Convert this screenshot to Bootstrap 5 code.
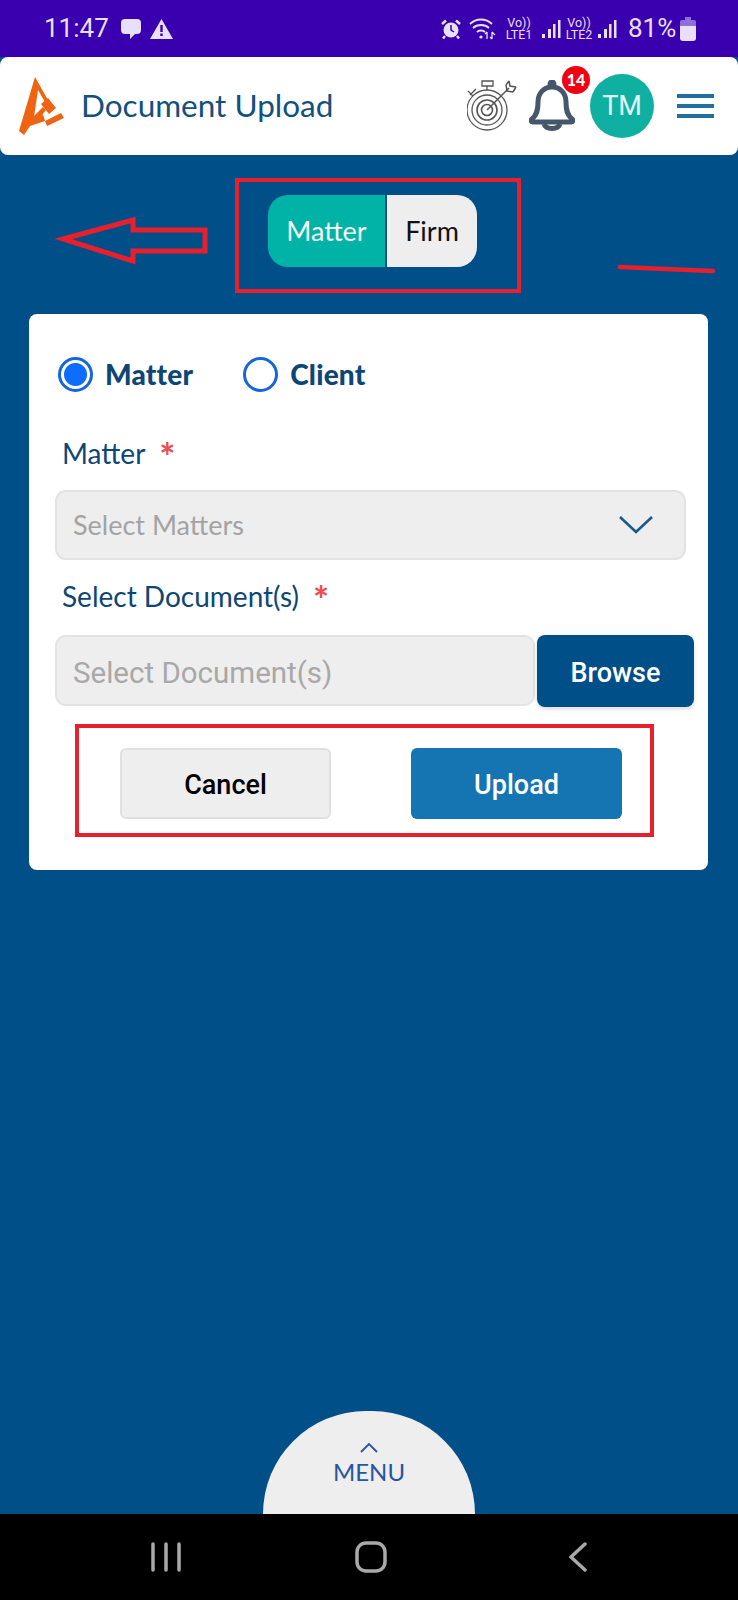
<!DOCTYPE html>
<html lang="en">
  <head>
    <meta charset="UTF-8" />
    <meta name="viewport" content="width=device-width, initial-scale=1.0" />
    <title>Document Upload</title>
    <link
      href="https://cdn.jsdelivr.net/npm/bootstrap@5.3.0/dist/css/bootstrap.min.css"
      rel="stylesheet"
    />
    <style>
      body {
        background: #014f89;
        font-family: Lato, sans-serif;
      }
      .app-screen {
        position: relative;
        width: 738px;
        height: 1600px;
        overflow: hidden;
      }
      .status-bar {
        height: 57px;
        background: #3a00af;
        color: #eadffa;
        font-family: Roboto, sans-serif;
      }
      .status-time {
        font-size: 26px;
        margin-left: 44px;
        width: 72px;
      }
      .status-pct {
        font-size: 26px;
        margin-left: 11px;
        width: 52px;
      }
      .lte-tag {
        font-size: 12.500px;
        line-height: 12px;
        text-align: center;
        width: 28px;
      }
      .app-header {
        height: 98px;
        background: #fff;
        border-radius: 8px;
      }
      .header-title {
        font-size: 31.500px;
        color: #12507e;
        margin-left: 17px;
      }
      .alert-count {
        position: absolute;
        top: -14px;
        right: -15px;
        width: 28px;
        height: 28px;
        border-radius: 50%;
        background: #f2000f;
        color: #fff;
        font-size: 16px;
        font-weight: 900;
        line-height: 28px;
        text-align: center;
      }
      .user-avatar {
        width: 64px;
        height: 64px;
        border-radius: 50%;
        background: #0fb0a2;
        color: #e4f7f5;
        font-family: Roboto, sans-serif;
        font-size: 27px;
        line-height: 64px;
        text-align: center;
      }
      .burger-bar {
        width: 37px;
        height: 4px;
        background: #1f6f9f;
      }
      .scope-switch {
        margin-top: 40px;
        margin-left: 7px;
        height: 72px;
      }
      .scope-switch .btn {
        font-size: 27px;
        border: 0;
        padding: 0;
      }
      .scope-switch .scope-on {
        width: 119px;
        background: #00b3a6;
        color: #f4fbfa;
        border-right: 2px solid #014f89;
        border-radius: 20px 0 0 20px;
      }
      .scope-switch .scope-off {
        width: 90px;
        background: #eeeeee;
        color: #111;
        border-radius: 0 20px 20px 0;
      }
      .upload-card {
        margin: 47px 30px 0 29px;
        height: 556px;
        border: 0;
        border-radius: 8px;
        padding: 42px 22px 0 26px;
      }
      .pick-row {
        height: 36px;
        margin-left: 3px;
      }
      .pick-row .form-check {
        padding: 0;
        margin: 0;
      }
      .pick-row .form-check-input {
        float: none;
        width: 35px;
        height: 35px;
        margin: 0 12px 0 0;
        border: 3px solid #1567d8;
        background-image: none;
      }
      .pick-row .form-check-input:checked {
        background-color: #fff;
        background-image: radial-gradient(circle, #0d6efd 0 11px, #fff 12px);
      }
      .pick-row .form-check-label {
        font-size: 28px;
        font-weight: 900;
        letter-spacing: 0.200px;
        color: #0d4675;
        opacity: 1;
      }
      .pick-gap {
        width: 50px;
      }
      .field-label {
        display: flex;
        align-items: center;
        height: 36px;
        font-size: 28px;
        line-height: 36px;
        color: #0d4675;
        margin: 0 0 0 7px;
      }
      .req-mark {
        color: #ee4b52;
        margin-left: 14px;
        padding-top: 6px;
        font-size: 38px;
        font-weight: 700;
        line-height: 36px;
      }
      .upload-card .form-select,
      .upload-card .form-control {
        height: 70px;
        background-color: #eeeeee;
        border: 2px solid #e3e3e3;
        border-radius: 11px;
        padding-left: 16px;
      }
      .upload-card .form-select {
        margin-top: 19px;
        font-size: 27px;
        color: #a3a3a3;
        background-position: right 31px center;
        background-size: 34px 18px;
        background-image: url("data:image/svg+xml,%3csvg xmlns='http://www.w3.org/2000/svg' viewBox='0 0 34 18'%3e%3cpath fill='none' stroke='%231a5a8a' stroke-width='2.6' d='M1 1l16 15L33 1'/%3e%3c/svg%3e");
      }
      .doc-group {
        margin-top: 21px;
        width: 639px;
      }
      .upload-card .form-control {
        font-family: Roboto, sans-serif;
        font-size: 29.500px;
        height: 71px;
        padding-top: 10px;
        padding-bottom: 6px;
      }
      .upload-card .form-control::placeholder {
        color: #a8a8a8;
        opacity: 1;
      }
      .browse-btn {
        width: 157px;
        height: 72px;
        margin-left: 2px;
        padding-top: 10px;
        background: #014f89;
        color: #fff;
        font-family: Roboto, sans-serif;
        font-size: 27px;
        font-weight: 500;
        border: 0;
        border-radius: 8px;
        box-shadow: 0 2px 4px rgba(0, 0, 0, 0.15);
      }
      .action-row {
        margin: 41px 0 0 65px;
        gap: 80px;
      }
      .action-row .btn {
        width: 211px;
        height: 71px;
        padding-top: 10px;
        font-family: Roboto, sans-serif;
        font-size: 27px;
        font-weight: 500;
        border-radius: 6px;
      }
      .cancel-btn {
        background: #eeeeee;
        color: #000;
        border: 2px solid #e0e0e0;
      }
      .send-btn {
        background: #1575b2;
        color: #fff;
        border: 0;
      }
      .menu-dome {
        width: 212px;
        height: 103px;
        margin-top: auto;
        background: #eeeeee;
        border-radius: 106px 106px 0 0;
        color: #27559f;
        font-size: 24px;
        line-height: 24px;
        padding-top: 32px;
        gap: 7px;
      }
      .nav-strip {
        height: 86px;
        background: #000;
        padding-left: 151px;
        padding-right: 151px;
      }
      .mark-box {
        position: absolute;
        border: 4px solid #e8202e;
        pointer-events: none;
      }
      .mark-scope {
        left: 235px;
        top: 178px;
        width: 286px;
        height: 115px;
      }
      .mark-actions {
        left: 75px;
        top: 724px;
        width: 579px;
        height: 113px;
      }
      .mark-draw {
        position: absolute;
        left: 0;
        top: 0;
        pointer-events: none;
      }
    </style>
  </head>
  <body class="m-0">
    <div class="app-screen d-flex flex-column">
      <div class="status-bar d-flex align-items-center flex-shrink-0">
        <span class="status-time">11:47</span>
        <svg width="22" height="22" viewBox="0 0 22 22" class="ms-1">
          <path fill="#eadffa" d="M5 1h12a4 4 0 0 1 4 4v7a4 4 0 0 1-4 4h-2l-5 5v-5H5a4 4 0 0 1-4-4V5a4 4 0 0 1 4-4z" />
        </svg>
        <svg width="23" height="21" viewBox="0 0 23 21" class="ms-2">
          <path fill="#eadffa" d="M11.500 1L23 21H0z" />
          <path fill="#3a00af" d="M10.300 7h2.400v7h-2.400zM10.300 15.500h2.400v2.500h-2.400z" />
        </svg>
        <div class="flex-grow-1"></div>
        <svg width="20" height="20" viewBox="0 0 20 20">
          <circle cx="10" cy="11" r="7.500" fill="#eadffa" />
          <path stroke="#3a00af" stroke-width="1.500" fill="none" d="M10 6v5l3 2" />
          <path stroke="#eadffa" stroke-width="2.500" d="M1 5l4-3.500M19 5l-4-3.500M4 17l-2 2.500M16 17l2 2.500" />
        </svg>
        <svg width="28" height="22" viewBox="0 0 28 22" class="ms-2">
          <g fill="none" stroke="#eadffa" stroke-width="1.800">
            <path d="M1 6c6-6 16-6 22 0M4 10c4-4 12-4 16 0M8 14c2-2 6-2 8 0" />
            <path d="M18 21v-7M16 16l2-2M23 14v7M21 19l2 2M26 17l-3-3" stroke-width="1.300" />
          </g>
          <circle cx="12" cy="19" r="1.600" fill="#eadffa" />
        </svg>
        <div class="lte-tag ms-2">Vo))<br />LTE1</div>
        <svg width="20" height="20" viewBox="0 0 20 20" class="ms-2">
          <path fill="#eadffa" d="M1 15h3v4H1zM7 10h3v9H7zM12 5h2.500v14H12zM17 1h2.500v18H17z" />
        </svg>
        <div class="lte-tag ms-1">Vo))<br />LTE2</div>
        <svg width="20" height="20" viewBox="0 0 20 20" class="ms-1">
          <path fill="#eadffa" d="M1 15h3v4H1zM7 10h3v9H7zM12 5h2.500v14H12zM17 1h2.500v18H17z" />
        </svg>
        <span class="status-pct">81%</span>
        <svg width="16" height="24" viewBox="0 0 16 24" style="margin-right: 42px">
          <path fill="#8d6fd8" d="M5 0h6v3h3a2 2 0 0 1 2 2v4H0V5a2 2 0 0 1 2-2h3z" />
          <path fill="#eadffa" d="M0 9h16v12a3 3 0 0 1-3 3H3a3 3 0 0 1-3-3z" />
        </svg>
      </div>

      <div class="app-header d-flex align-items-center flex-shrink-0">
        <svg width="46" height="60" viewBox="0 0 46 60" style="margin-left: 18px">
          <path fill="#ee6413" d="M17 1l13 23-3 2-7-12-4 27 7-5 3 5 1 4-15 5-6 9-5-4z" />
          <path fill="#ee6413" d="M23 28l7-6 8 10-7 6z" />
          <path fill="#ee6413" d="M25 31l3 3-9 11-5-3z" />
          <path fill="#ee6413" d="M27 45l16-8 3 5-17 8z" />
        </svg>
        <span class="header-title">Document Upload</span>
        <div class="flex-grow-1"></div>
        <svg width="50" height="52" viewBox="0 0 50 52" fill="none" stroke="#555" stroke-width="1.300">
          <circle cx="20" cy="30" r="20" />
          <circle cx="20" cy="30" r="15" />
          <circle cx="20" cy="30" r="10" stroke-width="1.600" />
          <circle cx="20" cy="30" r="5.500" stroke-width="1.600" />
          <path d="M15 1h11v5H15zM20 6v4M3 15l6-6M1 11l5 5" />
          <path d="M20 30L42 8M39 5l1 6 6 1M42 1l1 5 6 1M39 5l3-4M46 12l3-5" stroke-width="1.500" />
        </svg>
        <div class="position-relative" style="margin-left: 12px; width: 46px; height: 52px">
          <svg width="46" height="52" viewBox="0 0 46 52" fill="none" stroke="#46566b" stroke-width="5">
            <path d="M3 39c5-4 6-9 6-17 0-9 6-15 14-15s14 6 14 15c0 8 1 13 6 17 1.500 1.200 1 3-1 3H4c-2 0-2.500-1.800-1-3z" />
            <path d="M15 44c2 6 14 6 16 0" />
            <circle cx="23" cy="4" r="2" fill="#46566b" />
          </svg>
          <span class="alert-count">14</span>
        </div>
        <div class="user-avatar" style="margin-left: 15px">TM</div>
        <div class="d-flex flex-column" style="gap: 6px; margin: 0 24px 0 23px">
          <div class="burger-bar"></div>
          <div class="burger-bar"></div>
          <div class="burger-bar"></div>
        </div>
      </div>

      <div class="scope-switch d-flex justify-content-center flex-shrink-0">
        <button type="button" class="btn scope-on">Matter</button>
        <button type="button" class="btn scope-off">Firm</button>
      </div>

      <div class="card upload-card flex-shrink-0">
        <div class="pick-row d-flex align-items-center">
          <div class="form-check d-flex align-items-center">
            <input class="form-check-input" type="radio" name="scope" id="pickMatter" checked />
            <label class="form-check-label" for="pickMatter">Matter</label>
          </div>
          <div class="pick-gap"></div>
          <div class="form-check d-flex align-items-center">
            <input class="form-check-input" type="radio" name="scope" id="pickClient" />
            <label class="form-check-label" for="pickClient">Client</label>
          </div>
        </div>

        <label class="field-label" style="margin-top: 43px">Matter <span class="req-mark">*</span></label>
        <select class="form-select">
          <option>Select Matters</option>
        </select>

        <label class="field-label" style="margin-top: 18px">Select Document(s) <span class="req-mark">*</span></label>
        <div class="doc-group d-flex">
          <input type="text" class="form-control" placeholder="Select Document(s)" />
          <button type="button" class="btn browse-btn flex-shrink-0">Browse</button>
        </div>

        <div class="action-row d-flex">
          <button type="button" class="btn cancel-btn">Cancel</button>
          <button type="button" class="btn send-btn">Upload</button>
        </div>
      </div>

      <div class="menu-dome d-flex flex-column align-items-center align-self-center flex-shrink-0">
        <svg width="18" height="10" viewBox="0 0 18 10">
          <path fill="none" stroke="#27559f" stroke-width="1.800" d="M1 9l8-8 8 8" />
        </svg>
        <span>MENU</span>
      </div>

      <div class="nav-strip d-flex align-items-center justify-content-between flex-shrink-0">
        <svg width="30" height="30" viewBox="0 0 30 30" stroke="#a9a9a9" stroke-width="3.500" stroke-linecap="round">
          <path d="M2 2v26M15 2v26M28 2v26" />
        </svg>
        <svg width="32" height="32" viewBox="0 0 32 32" style="margin-left: -8px">
          <rect x="2" y="2" width="28" height="28" rx="9" fill="none" stroke="#a9a9a9" stroke-width="3.500" />
        </svg>
        <svg width="18" height="30" viewBox="0 0 18 30">
          <path fill="none" stroke="#a9a9a9" stroke-width="3.500" stroke-linecap="round" d="M16 2L2 15l14 13" />
        </svg>
      </div>

      <div class="mark-box mark-scope"></div>
      <div class="mark-box mark-actions"></div>
      <svg class="mark-draw" width="738" height="1600" viewBox="0 0 738 1600" fill="none" stroke="#e8202e">
        <path stroke-width="5" d="M63 239l70-19v10h72v21h-72v10z" />
        <path stroke-width="4.500" stroke-linecap="round" d="M620 267l46 2 47 2" />
      </svg>
    </div>
    <script src="https://cdn.jsdelivr.net/npm/bootstrap@5.3.0/dist/js/bootstrap.bundle.min.js"></script>
  </body>
</html>
